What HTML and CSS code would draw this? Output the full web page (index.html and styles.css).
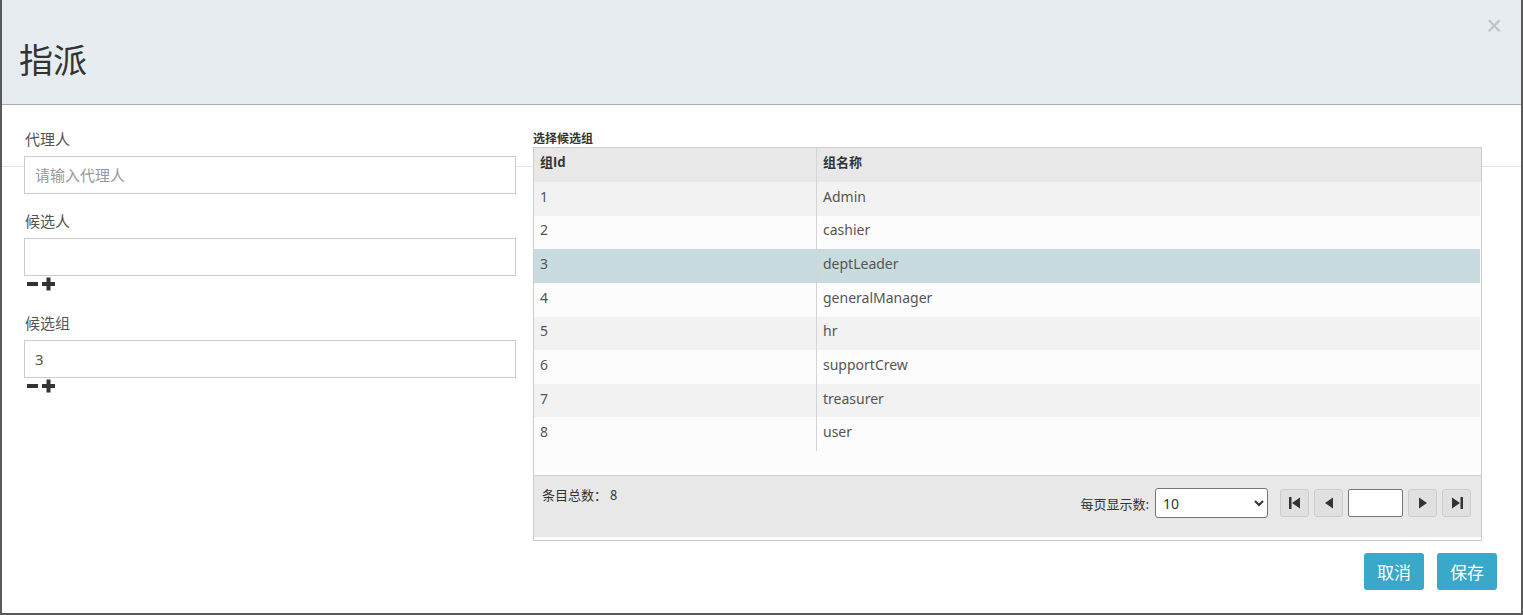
FILE: index.html
```html
<!DOCTYPE html>
<html lang="zh">
<head>
<meta charset="utf-8">
<title>指派</title>
<link rel="stylesheet" href="styles.css">
</head>
<body>
<div class="modal">
  <div class="modal-header">
    <h1 class="title">指派</h1>
    <span class="close">×</span>
  </div>
  <div class="modal-body">
    <div class="bg-line"></div>
    <div class="left-col">
      <label class="lbl">代理人</label>
      <input class="field" type="text" placeholder="请输入代理人">
      <label class="lbl lbl-next">候选人</label>
      <input class="field" type="text">
      <div class="pm">
        <svg width="30" height="14" viewBox="0 0 30 14"><rect x="1" y="5" width="11" height="4" fill="#333"/><rect x="16" y="5" width="13" height="4" fill="#333"/><rect x="20.5" y="0.5" width="4" height="13" fill="#333"/></svg>
      </div>
      <label class="lbl lbl-after-pm">候选组</label>
      <input class="field" type="text" value="3">
      <div class="pm">
        <svg width="30" height="14" viewBox="0 0 30 14"><rect x="1" y="5" width="11" height="4" fill="#333"/><rect x="16" y="5" width="13" height="4" fill="#333"/><rect x="20.5" y="0.5" width="4" height="13" fill="#333"/></svg>
      </div>
    </div>
    <div class="right-col">
      <div class="grid-title">选择候选组</div>
      <div class="grid">
        <div class="grid-head">
          <div class="c1">组Id</div>
          <div class="c2">组名称</div>
        </div>
        <div class="grid-rows">
          <div class="row odd"><div class="c1">1</div><div class="c2">Admin</div></div>
          <div class="row even"><div class="c1">2</div><div class="c2">cashier</div></div>
          <div class="row sel"><div class="c1">3</div><div class="c2">deptLeader</div></div>
          <div class="row even"><div class="c1">4</div><div class="c2">generalManager</div></div>
          <div class="row odd"><div class="c1">5</div><div class="c2">hr</div></div>
          <div class="row even"><div class="c1">6</div><div class="c2">supportCrew</div></div>
          <div class="row odd"><div class="c1">7</div><div class="c2">treasurer</div></div>
          <div class="row even"><div class="c1">8</div><div class="c2">user</div></div>
        </div>
        <div class="grid-empty"></div>
        <div class="pager">
          <div class="total">条目总数： 8</div>
          <div class="pager-right">
            <span class="per">每页显示数:</span>
            <select class="size"><option>10</option><option>20</option></select>
            <div class="nav">
              <button class="pbtn"><svg width="14" height="14" viewBox="0 0 14 14"><rect x="1" y="1" width="2.5" height="12" fill="#333"/><polygon points="4,7 12,1.5 12,12.5" fill="#333"/></svg></button>
              <button class="pbtn"><svg width="14" height="14" viewBox="0 0 14 14"><polygon points="3,7 11,1.5 11,12.5" fill="#333"/></svg></button>
              <input class="page-in" type="text">
              <button class="pbtn"><svg width="14" height="14" viewBox="0 0 14 14"><polygon points="11,7 3,1.5 3,12.5" fill="#333"/></svg></button>
              <button class="pbtn"><svg width="14" height="14" viewBox="0 0 14 14"><polygon points="10,7 2,1.5 2,12.5" fill="#333"/><rect x="10.5" y="1" width="2.5" height="12" fill="#333"/></svg></button>
            </div>
          </div>
        </div>
      </div>
    </div>
  </div>
  <div class="modal-footer">
    <button class="btn">取消</button>
    <button class="btn">保存</button>
  </div>
</div>
</body>
</html>
```
FILE: styles.css
```css
* { box-sizing: border-box; }
html, body { margin: 0; padding: 0; }
body {
  background: #5a5a5a;
  font-family: "Noto Sans", "Noto Sans CJK SC", sans-serif;
  color: #555;
  width: 1523px;
  height: 615px;
  overflow: hidden;
}
.modal {
  margin: 0 2px;
  height: 613px;
  background: #fff;
  display: flex;
  flex-direction: column;
}
.modal-header {
  height: 105px;
  background: #e7ecf0;
  border-bottom: 1px solid #a6aebb;
  display: flex;
  align-items: flex-start;
  justify-content: space-between;
  padding: 0 19px 0 17px;
}
.title {
  margin: 37px 0 0 0;
  font-size: 34px;
  line-height: 44px;
  font-weight: normal;
  color: #333;
  font-family: "Noto Sans CJK SC", sans-serif;
}
.close {
  margin-top: 10px;
  font-family: "Liberation Sans", sans-serif;
  font-size: 27px;
  font-weight: normal;
  color: #c0c2c4;
  line-height: 32px;
}
.modal-body {
  position: relative;
  display: flex;
  gap: 17px;
  padding: 23px 0 0 22px;
  height: 443px;
}
.bg-line {
  position: absolute;
  left: 0;
  right: 0;
  top: 61px;
  height: 1px;
  background: #e5e5e5;
}
.left-col {
  position: relative;
  width: 492px;
  display: flex;
  flex-direction: column;
}
.lbl {
  font-family: "Noto Sans CJK SC", sans-serif;
  font-size: 15px;
  line-height: 22px;
  color: #555;
  margin: 0 0 6px 1px;
}
.lbl-next { margin-top: 16px; }
.lbl-after-pm { margin-top: 20px; }
.field {
  height: 38px;
  width: 492px;
  border: 1px solid #ccc;
  background: #fff;
  padding: 0 10px;
  font-family: "Noto Sans", "Noto Sans CJK SC", sans-serif;
  font-size: 15px;
  color: #555;
  outline: none;
}
.field::placeholder { color: #999; }
.pm {
  height: 16px;
  padding: 1px 0 0 2px;
  display: flex;
}
.right-col {
  position: relative;
  width: 949px;
  display: flex;
  flex-direction: column;
}
.grid-title {
  font-family: "Noto Sans CJK SC", sans-serif;
  font-size: 12px;
  font-weight: bold;
  color: #333;
  line-height: 19px;
}
.grid {
  border: 1px solid #ccc;
  height: 394px;
  display: flex;
  flex-direction: column;
  background: #fcfcfc;
}
.grid-head {
  display: flex;
  height: 34px;
  background: #e8e8e8;
  font-size: 13px;
  font-weight: bold;
  color: #333;
  font-family: "Noto Sans CJK SC", sans-serif;
}
.grid-head .c1, .grid-head .c2 { line-height: 28px; }
.c1 {
  width: 283px;
  padding-left: 6px;
  border-right: 1px solid #d4d4d4;
  flex: none;
}
.c2 { padding-left: 6px; flex: 1; }
.grid-rows { margin-right: 1px; }
.row {
  display: flex;
  height: 33.625px;
  font-size: 14px;
  color: #555;
  align-items: stretch;
}
.row .c1, .row .c2 { display: flex; align-items: center; padding-bottom: 5px; }
.odd { background: #f2f2f2; }
.even { background: #fcfcfc; }
.sel { background: #c8dce0; }
.grid-empty { height: 24px; }
.pager {
  height: 62px;
  background: #e8e8e8;
  border-top: 1px solid #d0d0d0;
  display: flex;
  justify-content: space-between;
  align-items: flex-start;
  padding: 0 10px 0 8px;
}
.total {
  margin-top: 9px;
  font-family: "Noto Sans CJK SC", sans-serif;
  font-size: 13px;
  color: #333;
  line-height: 20px;
}
.pager-right {
  display: flex;
  align-items: center;
  margin-top: 12px;
}
.per {
  font-family: "Noto Sans CJK SC", sans-serif;
  font-size: 13px;
  color: #333;
  margin-right: 6px;
}
.size {
  width: 113px;
  height: 30px;
  border: 1px solid #767676;
  border-radius: 3px;
  background: #fff;
  font-family: "Noto Sans", sans-serif;
  font-size: 14px;
  color: #333;
  padding-left: 3px;
  margin-right: 12px;
}
.nav { display: flex; gap: 5px; align-items: center; }
.pbtn {
  width: 29px;
  height: 28px;
  background: #e0e0e0;
  border: 1px solid #ccc;
  border-radius: 3px;
  display: flex;
  align-items: center;
  justify-content: center;
  padding: 0;
}
.page-in {
  width: 55px;
  height: 28px;
  border: 1px solid #767676;
  border-radius: 2px;
  background: #fff;
}
.modal-footer {
  display: flex;
  justify-content: flex-end;
  gap: 13px;
  padding: 0 24px 0 0;
  margin-top: 5px;
}
.btn {
  width: 60px;
  height: 37px;
  background: #3aa8c8;
  color: #fff;
  border: none;
  border-radius: 3px;
  font-family: "Noto Sans CJK SC", sans-serif;
  font-size: 17px;
  padding: 0;
}
```
